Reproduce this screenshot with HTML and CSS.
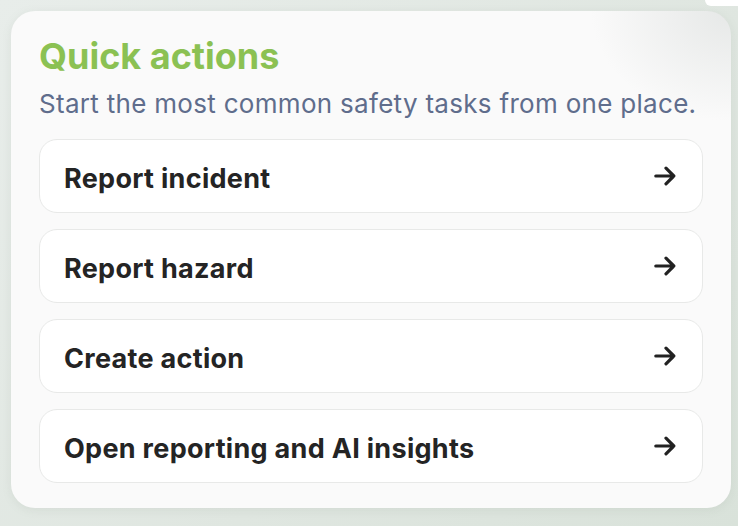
FILE: index.html
```html
<!DOCTYPE html>
<html lang="en">
<head>
<meta charset="utf-8">
<title>Quick actions</title>
<link rel="stylesheet" href="styles.css">
</head>
<body>
<div class="topbar"><div class="peek"></div></div>
<section class="card">
  <h2 class="title">Quick actions</h2>
  <p class="subtitle">Start the most common safety tasks from one place.</p>
  <div class="actions">
    <a class="action" href="#"><span class="label">Report incident</span><svg class="arrow" viewBox="0 0 22 20" width="22" height="20"><path d="M1.8 10H19.8M12 2.2L19.8 10L12 17.8"/></svg></a>
    <a class="action" href="#"><span class="label">Report hazard</span><svg class="arrow" viewBox="0 0 22 20" width="22" height="20"><path d="M1.8 10H19.8M12 2.2L19.8 10L12 17.8"/></svg></a>
    <a class="action" href="#"><span class="label">Create action</span><svg class="arrow" viewBox="0 0 22 20" width="22" height="20"><path d="M1.8 10H19.8M12 2.2L19.8 10L12 17.8"/></svg></a>
    <a class="action" href="#"><span class="label">Open reporting and AI insights</span><svg class="arrow" viewBox="0 0 22 20" width="22" height="20"><path d="M1.8 10H19.8M12 2.2L19.8 10L12 17.8"/></svg></a>
  </div>
</section>
</body>
</html>
```
FILE: styles.css
```css
* { box-sizing: border-box; }
html, body { margin: 0; padding: 0; }
body {
  width: 738px;
  height: 526px;
  overflow: hidden;
  font-family: Inter, "Noto Sans", "Liberation Sans", sans-serif;
  background: linear-gradient(135deg, #e8edea 0%, #dfe6e0 60%, #d9e2da 100%);
}
.topbar {
  display: flex;
  justify-content: flex-end;
  height: 6px;
}
.peek {
  width: 33px;
  height: 6px;
  background: #ffffff;
  border-bottom-left-radius: 14px;
}
.card {
  margin: 5px 0 0 11px;
  width: 720px;
  height: 497px;
  border-radius: 24px;
  background:
    radial-gradient(ellipse 140px 110px at 100% 0%, rgba(228,230,229,0.9), rgba(250,250,250,0) 100%),
    #fafafa;
  box-shadow: 0 2px 10px rgba(120, 140, 125, 0.12);
  padding: 23px 28px 23px 28px;
  display: flex;
  flex-direction: column;
}
.title {
  margin: 0;
  font-size: 36px;
  line-height: 44px;
  font-weight: 700;
  color: #8bc153;
}
.subtitle {
  margin: 10px 0 0 0;
  font-size: 26px;
  line-height: 32px;
  letter-spacing: 0.3px;
  color: #5f6d8c;
}
.actions {
  margin-top: 19px;
  display: flex;
  flex-direction: column;
  gap: 16px;
}
.action {
  height: 74px;
  display: flex;
  align-items: center;
  justify-content: space-between;
  padding: 0 26px 0 24px;
  border: 1.5px solid #e8e9e8;
  border-radius: 18px;
  background: #ffffff;
  text-decoration: none;
  color: #242424;
  font-size: 27px;
  font-weight: 700;
  letter-spacing: 0.3px;
}
.label {
  padding-top: 4px;
}
.arrow {
  flex-shrink: 0;
  fill: none;
  stroke: #222222;
  stroke-width: 3.2;
  stroke-linecap: round;
  stroke-linejoin: round;
}
```
